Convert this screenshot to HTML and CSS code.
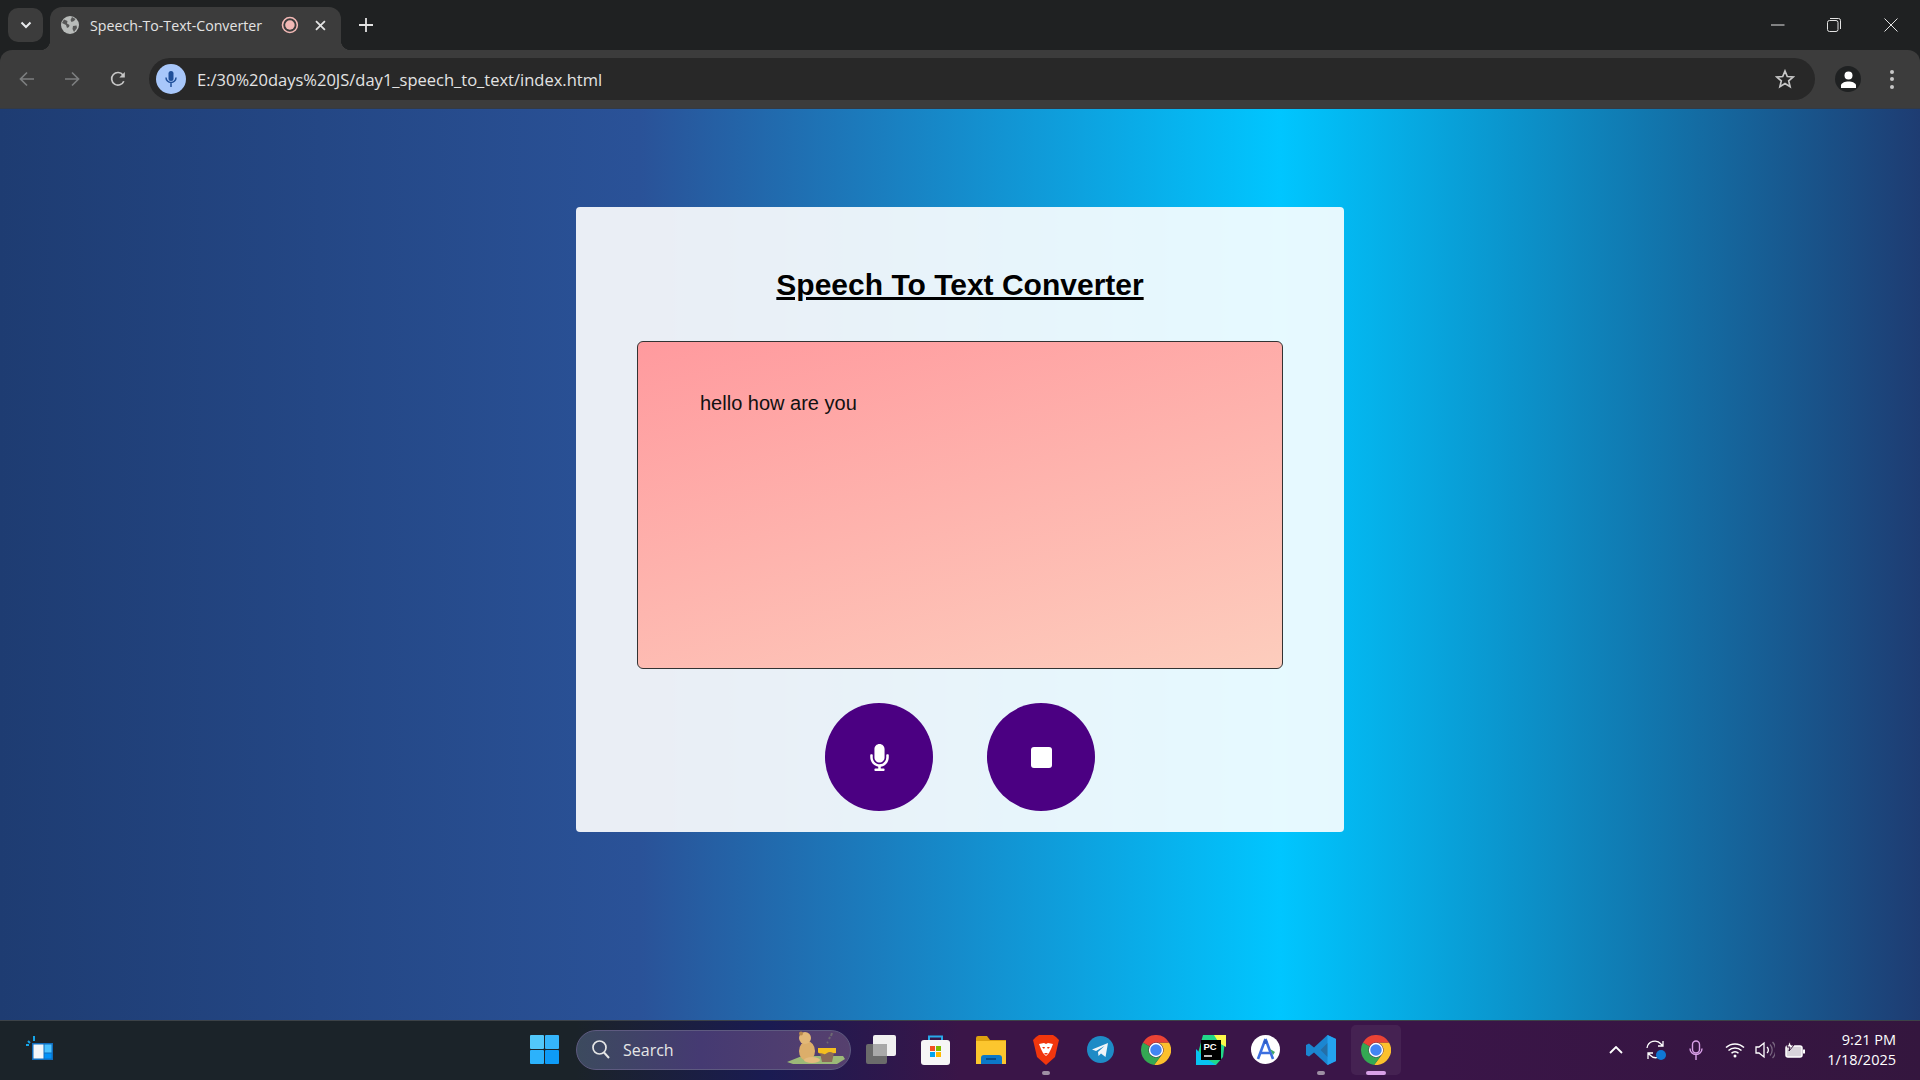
FILE: index.html
```html
<!doctype html>
<html>
<head>
<meta charset="utf-8">
<title>Speech-To-Text-Converter</title>
<link rel="stylesheet" href="styles.css">
</head>
<body>
<svg class="defs" width="0" height="0">
  <symbol id="chrome" viewBox="0 0 48 48">
    <path fill="#fbc02d" d="M44.8 12A24 24 0 0 1 20.9 47.8L34.4 30A12 12 0 0 0 24 12Z"/>
    <path fill="#34a853" d="M3.2 12A24 24 0 0 0 20.9 47.8L34.4 30A12 12 0 0 1 13.6 18Z"/>
    <path fill="#ea4335" d="M3.2 12A24 24 0 0 1 44.8 12H24A12 12 0 0 0 13.6 18Z"/>
    <circle cx="24" cy="24" r="11.5" fill="#fff"/>
    <circle cx="24" cy="24" r="9.2" fill="#4285f4"/>
  </symbol>
  <symbol id="fa-mic" viewBox="0 0 352 512">
    <path fill="currentColor" d="M176 352c53.02 0 96-42.98 96-96V96c0-53.02-42.98-96-96-96S80 42.98 80 96v160c0 53.02 42.98 96 96 96zm160-160h-16c-8.84 0-16 7.16-16 16v48c0 74.8-64.49 134.82-140.79 127.38C96.71 376.89 48 317.11 48 250.3V208c0-8.84-7.16-16-16-16H16c-8.84 0-16 7.16-16 16v40.16c0 89.64 63.97 169.55 152 181.69V464H96c-8.84 0-16 7.16-16 16v16c0 8.84 7.16 16 16 16h160c8.84 0 16-7.16 16-16v-16c0-8.84-7.16-16-16-16h-56v-33.77C285.71 418.47 352 344.9 352 256v-48c0-8.84-7.16-16-16-16z"/>
  </symbol>
</svg>

<div class="tabstrip">
  <div class="tabsearch">
    <svg width="12" height="8" viewBox="0 0 12 8"><path d="M1.5 1.5 6 6l4.5-4.5" fill="none" stroke="#e8eaed" stroke-width="2"/></svg>
  </div>
  <div class="tab">
    <svg class="favicon" width="18" height="18" viewBox="0 0 18 18"><circle cx="9" cy="9" r="9" fill="#b9bcba"/><path d="M3 3.500 6.500 5 6 7.500 8.500 9l-.5 2-2 1-1-3-4-2ZM11 1l3.500 2-1.500 2-2.500 1-1-2ZM12 10l3.500-.5.500 2.500-3 4-1.500-3Z" fill="#575757"/></svg>
    <span class="tabtitle">Speech-To-Text-Converter</span>
    <svg class="recording" width="18" height="18" viewBox="0 0 18 18"><circle cx="9" cy="9" r="7.500" fill="none" stroke="#f2b8b5" stroke-width="1.600"/><circle cx="9" cy="9" r="4.800" fill="#f2b8b5"/></svg>
    <svg class="tabclose" width="11" height="11" viewBox="0 0 11 11"><path d="m1 1 9 9m0-9-9 9" stroke="#e3e3e3" stroke-width="1.800"/></svg>
  </div>
  <svg class="newtab" width="14" height="14" viewBox="0 0 14 14"><path d="M7 0v14M0 7h14" stroke="#e3e3e3" stroke-width="1.800"/></svg>
  <div class="winbtns">
    <svg width="14" height="14" viewBox="0 0 14 14"><path d="M0 7h13.500" stroke="#e3e3e3"/></svg>
    <svg width="14" height="14" viewBox="0 0 14 14"><rect x=".5" y="2.500" width="10.500" height="11" rx="2" fill="none" stroke="#e3e3e3"/><path d="M3 .5h8.500a2 2 0 0 1 2 2V11" fill="none" stroke="#e3e3e3"/></svg>
    <svg width="14" height="14" viewBox="0 0 14 14"><path d="m.5.500 13 13m0-13-13 13" stroke="#e3e3e3"/></svg>
  </div>
</div>

<div class="toolbar">
  <svg class="navbtn" width="16" height="16" viewBox="0 0 16 16"><path d="M15 8H2m6-6.500L1.500 8 8 14.500" fill="none" stroke="#7c7e7f" stroke-width="1.700"/></svg>
  <svg class="navbtn" width="16" height="16" viewBox="0 0 16 16"><path d="M1 8h13M8 1.500 14.500 8 8 14.500" fill="none" stroke="#7c7e7f" stroke-width="1.700"/></svg>
  <svg class="navbtn" width="16" height="16" viewBox="0 0 16 16"><path d="M13.800 10.200A6.300 6.300 0 1 1 13 4" fill="none" stroke="#c7c7c7" stroke-width="1.700"/><path d="M14.800 1v5.500H9.300Z" fill="#c7c7c7"/></svg>
  <div class="omnibox">
    <div class="micbubble">
      <svg width="12" height="18" viewBox="0 0 12 18"><rect x="3.500" y="1" width="5" height="10" rx="2.500" fill="#1f4f99"/><path d="M1 7.500a5 5 0 0 0 10 0M6 12.500V17" fill="none" stroke="#1f4f99" stroke-width="1.500"/></svg>
    </div>
    <span class="url">E:/30%20days%20JS/day1_speech_to_text/index.html</span>
    <svg class="star" width="20" height="20" viewBox="0 0 20 20"><path d="m10 2 2.300 5.500 5.900.5-4.500 3.900 1.400 5.800L10 14.600l-5.100 3.100 1.400-5.800L1.800 8l5.900-.5Z" fill="none" stroke="#c7c7c7" stroke-width="1.700"/></svg>
  </div>
  <div class="avatar">
    <svg width="17" height="17" viewBox="0 0 17 17"><circle cx="8.500" cy="4.500" r="4" fill="#fff"/><path d="M1 17v-2.500C1 12 5 10.500 8.500 10.500S16 12 16 14.500V17Z" fill="#fff"/></svg>
  </div>
  <div class="menudots"><i></i><i></i><i></i></div>
</div>

<div class="page">
  <div class="card">
    <h1 class="title">Speech To Text Converter</h1>
    <textarea class="output" readonly>hello how are you</textarea>
    <div class="actions">
      <button class="roundbtn"><svg class="bigmic" width="19" height="27"><use href="#fa-mic"/></svg></button>
      <button class="roundbtn"><span class="stopicon"></span></button>
    </div>
  </div>
</div>

<div class="taskbar">
  <svg class="widgets" width="27" height="25" viewBox="0 0 27 25">
    <path d="M2 6 4 8M8 1v5M0 10h3" stroke="#16a4e8" stroke-width="2"/>
    <rect x="6" y="8" width="21" height="17" fill="#0f6cbd"/>
    <rect x="7.500" y="9.500" width="10" height="14" fill="#f4f6f8"/>
    <rect x="18.500" y="9.500" width="7" height="8" fill="#4cc2ff"/>
    <rect x="18.500" y="18.500" width="7" height="5" fill="#0091f8"/>
  </svg>
  <svg class="starticon" width="29" height="29" viewBox="0 0 29 29">
    <rect width="14" height="14" rx="1" fill="#52c8fb"/>
    <rect x="15" width="14" height="14" rx="1" fill="#35b5fb"/>
    <rect y="15" width="14" height="14" rx="1" fill="#2cb2fb"/>
    <rect x="15" y="15" width="14" height="14" rx="1" fill="#0e9bf7"/>
  </svg>
  <div class="searchbox">
    <svg width="18" height="19" viewBox="0 0 18 19"><circle cx="7.500" cy="7.500" r="6.500" fill="none" stroke="#e6e6e6" stroke-width="1.700"/><path d="m12 12.500 5 5.500" stroke="#e6e6e6" stroke-width="2"/></svg>
    <span class="searchtext">Search</span>
    <svg class="bear" width="58" height="34" viewBox="0 0 58 34">
      <path d="M0 31 15 25h41l2 3-8 5H6Z" fill="#9cb978"/>
      <ellipse cx="20" cy="20" rx="8" ry="10" fill="#dcae6a"/>
      <circle cx="18" cy="7" r="6" fill="#e2b877"/>
      <circle cx="14" cy="2.500" r="2" fill="#b98a4c"/>
      <ellipse cx="25" cy="29" rx="8" ry="3" fill="#e4bb7e"/>
      <path d="M32 19h16l-1 3-2 9H35l-2-9Z" fill="#8a6a58"/>
      <path d="M31 17h18v5c-3 1-3-1-6-1s-4 3-6 2-6 0-6-2Z" fill="#f5bf1f"/>
      <path d="M42 8l1-2M44 5l1-3M40 12l1-1" stroke="#6d6a72" stroke-width="2"/>
    </svg>
  </div>
  <div class="apps">
    <div class="app">
      <svg width="30" height="29" viewBox="0 0 30 29"><rect y="9" width="21" height="20" rx="2" fill="#6b6b6b"/><rect x="7" width="23" height="21" rx="2" fill="#f0f0f0"/><rect x="7" y="9" width="14" height="12" fill="#a9a9a9"/></svg>
    </div>
    <div class="app">
      <svg width="29" height="30" viewBox="0 0 29 30"><path d="M8 5V1.500h13V5" fill="none" stroke="#28a8ea" stroke-width="2"/><rect y="5" width="29" height="25" rx="3" fill="#f6f6f6"/><rect x="9" y="11" width="5" height="5" fill="#f25022"/><rect x="15" y="11" width="5" height="5" fill="#7fba00"/><rect x="9" y="17" width="5" height="5" fill="#00a4ef"/><rect x="15" y="17" width="5" height="5" fill="#ffb900"/></svg>
    </div>
    <div class="app">
      <svg width="30" height="28" viewBox="0 0 30 28"><path d="M0 2a2 2 0 0 1 2-2h9l3 4h16v6H0Z" fill="#dda10f"/><rect y="5" width="30" height="23" fill="#fcc62e"/><path d="M5 28v-6a3 3 0 0 1 3-3h15a3 3 0 0 1 3 3v6Z" fill="#0c78c8"/><path d="M10 23h10" stroke="#063f78" stroke-width="1.500"/></svg>
    </div>
    <div class="app">
      <svg width="26" height="30" viewBox="0 0 26 30"><path d="M6 0h14l3 2 3 3-1 4-3 13-9 8-9-8L1 9 0 5l3-3Z" fill="#f1360d"/><path d="M6 9l5-1 2 1 2-1 5 1-2 5-2 4-3 3-3-3-2-4Z" fill="#fff"/><path d="M9 12h3l-1 2Zm5 0h3l-2 2Zm-3 6h4l-2 2Z" fill="#f1360d"/></svg>
      <i class="dot"></i>
    </div>
    <div class="app">
      <svg width="27" height="27" viewBox="0 0 27 27"><circle cx="13.500" cy="13.500" r="13.500" fill="#1e8bc6"/><path d="M5 13.500 21 7l-2.500 14-4.500-3.500-2.500 2.500-.5-4 6.500-6-8.500 5Z" fill="#f2f5f8"/></svg>
    </div>
    <div class="app">
      <svg width="30" height="30"><use href="#chrome"/></svg>
    </div>
    <div class="app">
      <svg width="30" height="30" viewBox="0 0 30 30"><path d="M7 0h23L28 14l-1 8-7 8H0l2-12Z" fill="#21d789"/><path d="M18 0h12v12L23 8Z" fill="#fcf84a"/><path d="M0 30V14l8 8 12 8Z" fill="#07c3f2"/><rect x="5" y="5" width="20" height="20" fill="#000"/><path d="M8 21h8" stroke="#fff" stroke-width="1.500"/><text class="pctext" x="7.500" y="14.500">PC</text></svg>
    </div>
    <div class="app">
      <svg width="29" height="29" viewBox="0 0 29 29"><circle cx="14.500" cy="14.500" r="14.500" fill="#fff"/><path d="M14.500 4 7 24M14.500 4 22 24M9.500 18h10" fill="none" stroke="#3c6fe0" stroke-width="2.600"/><path d="M19 14l3 6 2-3Z" fill="#3fa66b"/><circle cx="14.500" cy="7" r="2" fill="#2d5cc4"/></svg>
    </div>
    <div class="app">
      <svg width="30" height="30" viewBox="0 0 30 30"><path d="M21.500 0 30 4v22l-8.500 4L8 17.500l-5 4L0 20V10l3-1.500 5 4Z" fill="#1b86d1"/><path d="M21.500 0 30 4v22l-8.500 4Z" fill="#24a3f0"/><path d="m21.500 8-7 7 7 7Z" fill="#3c3c4a" opacity=".3"/></svg>
      <i class="dot"></i>
    </div>
    <div class="app active">
      <svg width="30" height="30"><use href="#chrome"/></svg>
      <i class="dot dot-active"></i>
    </div>
  </div>
  <div class="tray">
    <svg class="tray-chevron" width="14" height="8" viewBox="0 0 14 8"><path d="m1 7 6-6 6 6" fill="none" stroke="#fff" stroke-width="1.800"/></svg>
    <svg class="tray-sync" width="22" height="22" viewBox="0 0 22 22"><path d="M2 9a8 8 0 0 1 14-4l2 2M18 2v5h-5M14 18a8 8 0 0 1-9-2l-2-2M3 20v-6h5" fill="none" stroke="#fff" stroke-width="1.300"/><circle cx="16" cy="16" r="5" fill="#0f78d4"/></svg>
    <svg class="tray-mic" width="14" height="20" viewBox="0 0 14 20"><rect x="3.500" y="1" width="7" height="12" rx="3.500" fill="none" stroke="#d9a0e8" stroke-width="1.400"/><path d="M1 8.500a6 6 0 0 0 12 0M7 15v5" fill="none" stroke="#d9a0e8" stroke-width="1.400"/></svg>
    <svg class="tray-wifi" width="20" height="16" viewBox="0 0 20 16"><path d="M1 5.500a13 13 0 0 1 18 0M3.500 8.500a9.500 9.500 0 0 1 13 0M6.500 11.300a5 5 0 0 1 7 0" fill="none" stroke="#fff" stroke-width="1.500"/><circle cx="10" cy="14" r="1.500" fill="#fff"/></svg>
    <svg class="tray-sound" width="20" height="18" viewBox="0 0 20 18"><path d="M1 6h3l5-4v14l-5-4H1Z" fill="none" stroke="#fff" stroke-width="1.300"/><path d="M12 6a4 4 0 0 1 0 6" fill="none" stroke="#fff" stroke-width="1.300"/><path d="M15 3.500a8 8 0 0 1 0 11M17.500 1a11.500 11.500 0 0 1 0 16" fill="none" stroke="#77657f" stroke-width="1.300"/></svg>
    <svg class="tray-battery" width="20" height="18" viewBox="0 0 20 18"><rect x="1" y="5" width="16" height="11" rx="2" fill="#d8d4da" stroke="#fff" stroke-width="1.500"/><path d="M18 8.500h2v4h-2Z" fill="#fff"/><path d="M5 0 2 6h3L4 10l5-6H6Z" fill="#fff" stroke="#38163f"/></svg>
    <div class="clock"><span>9:21 PM</span><span>1/18/2025</span></div>
  </div>
</div>
</body>
</html>
```

FILE: styles.css
```css
html, body {
	margin: 0;
	padding: 0;
}
body {
	width: 1920px;
	height: 1080px;
	overflow: hidden;
	display: flex;
	flex-direction: column;
	background-color: #1f2122;
	font-family: "Open Sans", "Liberation Sans", sans-serif;
}
.defs {
	position: absolute;
}

/* browser top */
.tabstrip {
	height: 50px;
	background-color: #1f2122;
	display: flex;
	align-items: flex-end;
	padding-left: 8px;
}
.tabsearch {
	width: 35px;
	height: 34px;
	margin-bottom: 8px;
	border-radius: 10px;
	background-color: #3c3c3c;
	display: flex;
	align-items: center;
	justify-content: center;
}
.tab {
	position: relative;
	width: 291px;
	height: 43px;
	margin-left: 7px;
	box-sizing: border-box;
	padding: 0 15px 7px 11px;
	border-radius: 12px 12px 0 0;
	background-color: #3c3c3c;
	display: flex;
	align-items: center;
	color: #e3e3e3;
	font-size: 14.2px;
}
.tab::before, .tab::after {
	content: "";
	position: absolute;
	bottom: 0;
	width: 10px;
	height: 10px;
}
.tab::before {
	left: -10px;
	background: radial-gradient(circle at 0 0, #1f2122 10px, #3c3c3c 10.5px);
}
.tab::after {
	right: -10px;
	background: radial-gradient(circle at 100% 0, #1f2122 10px, #3c3c3c 10.5px);
}
.favicon {
	flex: none;
}
.tabtitle {
	margin-left: 11px;
	width: 182px;
	white-space: nowrap;
}
.recording {
	margin-left: 11px;
}
.tabclose {
	margin-left: 16px;
}
.newtab {
	margin: 0 18px 18px 18px;
}
.winbtns {
	margin-left: auto;
	align-self: flex-start;
	display: flex;
	gap: 43px;
	padding: 18px 22px 0 0;
}
.winbtns svg {
	display: block;
}
.winbtns svg:first-child {
	margin-right: -1px;
}

.toolbar {
	height: 59px;
	box-sizing: border-box;
	background-color: #3c3c3c;
	border-bottom: 1px solid #333a45;
	border-radius: 12px 12px 0 0;
	display: flex;
	align-items: center;
	padding: 0 26px 0 19px;
}
.navbtn {
	flex: none;
	margin-right: 29px;
}
.navbtn:nth-child(2) {
	margin-right: 30px;
}
.navbtn:nth-child(3) {
	margin-right: 23px;
}
.omnibox {
	flex: none;
	width: 1666px;
	height: 42px;
	border-radius: 21px;
	background-color: #282828;
	display: flex;
	align-items: center;
	box-sizing: border-box;
	padding: 0 20px 0 7px;
}
.micbubble {
	width: 30px;
	height: 30px;
	border-radius: 50%;
	background-color: #a8c7fa;
	display: flex;
	align-items: center;
	justify-content: center;
}
.url {
	margin-left: 11px;
	color: #e3e3e3;
	font-size: 16.5px;
	white-space: nowrap;
}
.star {
	margin-left: auto;
}
.avatar {
	flex: none;
	width: 26px;
	height: 26px;
	margin-left: 20px;
	border-radius: 50%;
	background-color: #1f2122;
	display: flex;
	align-items: center;
	justify-content: center;
	overflow: hidden;
}
.menudots {
	margin-left: 29px;
	display: flex;
	flex-direction: column;
	gap: 3.500px;
}
.menudots i {
	display: block;
	width: 4px;
	height: 4px;
	border-radius: 50%;
	background-color: #c7c7c7;
}

/* the actual page */
.page {
	flex: 1;
	background: linear-gradient(to right, #1e3c72, #2a5298, #00c6ff, #1e3c72);
	padding-top: 98px;
	box-sizing: border-box;
}
.card {
	width: 768px;
	margin: 0 auto;
	box-sizing: border-box;
	padding: 60px 61px 21px;
	border-radius: 4px;
	background: rgba(255,255,255,0.9);
	font-family: "Liberation Sans", Arial, sans-serif;
}
.title {
	margin: 0 0 38px;
	font-size: 30px;
	line-height: 36px;
	font-weight: bold;
	text-align: center;
	text-decoration: underline;
	color: #000;
}
.output {
	display: block;
	width: 646px;
	height: 328px;
	box-sizing: border-box;
	padding: 50px 62px;
	border: 1px solid #333;
	border-radius: 6px;
	outline: none;
	resize: none;
	overflow: hidden;
	background: linear-gradient(165deg, #ff9a9e, #fdcdbd);
	font-family: "Liberation Sans", Arial, sans-serif;
	font-size: 20px;
	color: #111;
}
.actions {
	margin-top: 34px;
	display: flex;
	justify-content: center;
	gap: 54px;
}
.roundbtn {
	width: 108px;
	height: 108px;
	padding: 0;
	border: none;
	border-radius: 50%;
	background-color: indigo;
	color: #fff;
	display: flex;
	align-items: center;
	justify-content: center;
}
.stopicon {
	display: block;
	width: 21px;
	height: 21px;
	border-radius: 3px;
	background-color: #fff;
}

/* windows taskbar */
.taskbar {
	height: 60px;
	box-sizing: border-box;
	border-top: 1px solid #3c4248;
	background: linear-gradient(to right, #1b2329 0%, #1b2329 30%, #1a1b52 40%, #3a1548 50%, #3a1548 75%, #34163e 100%);
	display: flex;
	align-items: center;
	padding: 0 0 2px 26px;
}
.widgets {
	flex: none;
	margin-right: 477px;
	margin-top: -5px;
}
.starticon {
	flex: none;
	margin-right: 17px;
}
.searchbox {
	flex: none;
	width: 275px;
	height: 40px;
	box-sizing: border-box;
	padding-left: 15px;
	border: 1px solid #5e5a80;
	border-radius: 20px;
	background: linear-gradient(to right, #3c4a5e, #453a72 45%, #56406e);
	display: flex;
	align-items: center;
	position: relative;
}
.searchtext {
	margin-left: 13px;
	color: #e6e6e6;
	font-size: 16px;
}
.bear {
	margin-left: auto;
	margin-right: 5px;
	margin-top: -4px;
}
.apps {
	display: flex;
	margin-left: 2px;
}
.app {
	position: relative;
	width: 55px;
	height: 50px;
	box-sizing: border-box;
	display: flex;
	align-items: center;
	justify-content: center;
}
.active::before {
	content: "";
	position: absolute;
	top: 0;
	bottom: 0;
	left: 3px;
	right: 2px;
	border-radius: 5px;
	background-color: rgba(255,255,255,0.06);
}
.app svg {
	position: relative;
}
.dot {
	position: absolute;
	left: 24px;
	bottom: 0;
	width: 8px;
	height: 4px;
	border-radius: 2px;
	background-color: #9e8fa4;
}
.dot-active {
	left: 18px;
	width: 20px;
	background-color: #d9a0e8;
}
.pctext {
	font-family: "Liberation Sans", sans-serif;
	font-size: 9.500px;
	font-weight: bold;
	fill: #fff;
}
.tray {
	margin-left: auto;
	display: flex;
	align-items: center;
	padding-right: 24px;
}
.tray-chevron {
	margin-right: 22px;
}
.tray-sync {
	margin-right: 22px;
}
.tray-mic {
	margin-right: 22px;
}
.tray-wifi {
	margin-right: 10px;
}
.tray-sound {
	margin-right: 10px;
}
.tray-battery {
	margin-right: 22px;
}
.clock {
	display: flex;
	flex-direction: column;
	align-items: flex-end;
	color: #fff;
	font-size: 14.5px;
	line-height: 20px;
}
```
